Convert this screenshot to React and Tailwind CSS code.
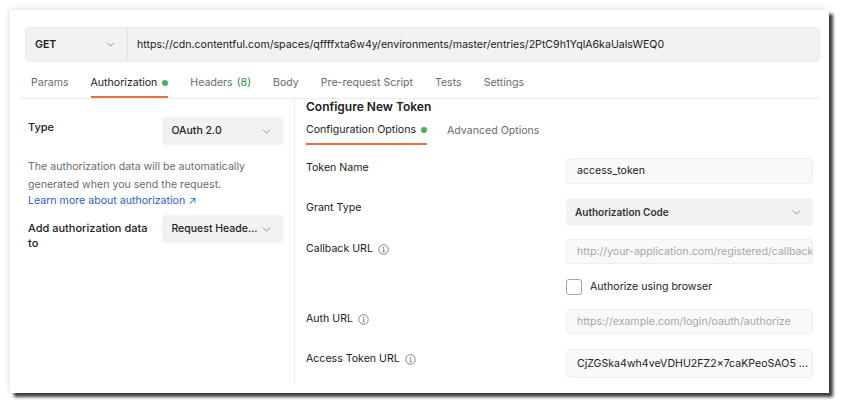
import React from 'react';
import { ChevronDown } from 'lucide-react';

// small circled "i" used next to field labels
const InfoIcon = () => (
    <svg width="11" height="11" viewBox="0 0 12 12" className="ml-[5px] text-[#6b6b6b]">
        <circle cx="6" cy="6" r="5.2" fill="none" stroke="currentColor" strokeWidth="0.9" />
        <circle cx="6" cy="3.6" r="0.7" fill="currentColor" />
        <path d="M5.2 5.3H6.3V8.6M5 8.6H7.2" fill="none" stroke="currentColor" strokeWidth="0.9" />
    </svg>
);

const Dot = () => <span className="ml-[5px] inline-block w-[6px] h-[6px] rounded-full bg-[#45b35a]" />;

const TABS = [
    { label: 'Params' },
    { label: 'Authorization', active: true, dot: true },
    { label: 'Headers', count: '(8)' },
    { label: 'Body' },
    { label: 'Pre-request Script' },
    { label: 'Tests' },
    { label: 'Settings' },
];

const Field = ({ label, info, children, className = '' }) => (
    <div className={`flex items-start ${className}`}>
        <div className="w-[260px] pt-[2px] leading-[16px] flex items-center text-[#212121]">
            {label}
            {info && <InfoIcon />}
        </div>
        <div className="w-[247px]">{children}</div>
    </div>
);

const Input = ({ value, placeholder, h = 'h-[26px]' }) => (
    <div className={`${h} flex items-center px-[10px] bg-[#f9f9f9] border border-[#ededed] rounded-[4px] overflow-hidden whitespace-nowrap`}>
        {value ? <span className="text-[#212121]">{value}</span> : <span className="text-[#a6a6a6]">{placeholder}</span>}
    </div>
);

const Select = ({ value, bold, className = '' }) => (
    <div className={`h-[28px] flex items-center justify-between pl-[9px] pr-[10px] bg-[#f2f2f2] rounded-[4px] whitespace-nowrap ${className}`}>
        <span className={`${bold ? 'font-semibold text-[10px] text-[#333]' : 'text-[10.5px] font-medium text-[#212121]'}`}>{value}</span>
        <ChevronDown className="w-[13px] h-[13px] text-[#7a7a7a]" strokeWidth={1.5} />
    </div>
);

export default function App() {
    return (
        <div className="w-[841px] h-[405px] bg-white pt-[10px] pl-[10px] font-['Inter',sans-serif] text-[10.6px]">
            <div className="w-[819px] h-[383px] bg-white shadow-[4px_4px_3px_rgba(0,0,0,0.75),-1px_-1px_6px_rgba(0,0,0,0.12)] flex flex-col">

                {/* URL bar */}
                <div className="mt-[17px] ml-[15px] w-[795px] h-[35px] flex bg-[#f2f2f2] border border-[#ececec] rounded-[4px]">
                    <div className="w-[102px] flex items-center justify-between pl-[9px] pr-[10px] border-r border-[#e2e2e2]">
                        <span className="font-semibold text-[10.6px] text-[#212121]">GET</span>
                        <ChevronDown className="w-[13px] h-[13px] text-[#7a7a7a]" strokeWidth={1.5} />
                    </div>
                    <div className="flex items-center pl-[9px] text-[10.6px] text-[#212121] whitespace-nowrap">
                        https://cdn.contentful.com/spaces/qffffxta6w4y/environments/master/entries/2PtC9h1YqlA6kaUalsWEQ0
                    </div>
                </div>

                {/* Request tabs */}
                <div className="mt-[8px] ml-[10px] w-[800px] flex border-b border-[#ededed] pl-[11px] gap-[22px]">
                    {TABS.map((tab) => (
                        <div
                            key={tab.label}
                            className={`h-[28px] flex items-center border-b-2 ${tab.active ? 'border-[#e8703f] text-[#212121]' : 'border-transparent text-[#6b6b6b]'}`}
                        >
                            <span className="text-[10.6px]">{tab.label}</span>
                            {tab.count && <span className="ml-[4px] text-[10.6px] text-[#2f8f43]">{tab.count}</span>}
                            {tab.dot && <Dot />}
                        </div>
                    ))}
                </div>

                <div className="flex flex-1 ml-[10px] mb-[9px]">
                    {/* Left: auth type */}
                    <div className="w-[275px] border-r border-[#ededed] pl-[8px] pr-[11px] pt-[18px]">
                        <div className="flex items-start">
                            <div className="w-[135px] pt-[2px] leading-[16px] font-medium text-[11px] text-[#212121]">Type</div>
                            <Select value="OAuth 2.0" className="w-[121px]" />
                        </div>
                        <p className="mt-[13px] leading-[18px] text-[#6b6b6b]">
                            The authorization data will be automatically generated when you send the request.
                        </p>
                        <div className="leading-[14px] text-[#2464c8]">Learn more about authorization ↗</div>
                        <div className="mt-[7px] flex items-start">
                            <div className="w-[135px] pr-[12px] pt-[6px] leading-[15px] font-medium text-[11px] text-[#212121]">Add authorization data to</div>
                            <Select value="Request Heade..." className="w-[121px]" />
                        </div>
                    </div>

                    {/* Right: configure token */}
                    <div className="flex-1 pl-[11px]">
                        <div className="text-[12px] font-semibold text-[#212121] leading-[16px]">Configure New Token</div>
                        <div className="mt-[6px] flex gap-[20px]">
                            <div className="h-[24px] flex items-center border-b-2 border-[#e8703f] pb-[4px] text-[#212121] text-[10.6px]">
                                Configuration Options <Dot />
                            </div>
                            <div className="h-[24px] flex items-center pb-[4px] text-[#6b6b6b] text-[10.6px]">Advanced Options</div>
                        </div>

                        <Field label="Token Name" className="mt-[13px]">
                            <Input value="access_token" />
                        </Field>
                        <Field label="Grant Type" className="mt-[14px]">
                            <Select value="Authorization Code" bold />
                        </Field>
                        <Field label="Callback URL" info className="mt-[13px]">
                            <Input placeholder="http://your-application.com/registered/callback" h="h-[25px]" />
                        </Field>
                        <div className="mt-[15px] ml-[260px] flex items-center">
                            <span className="w-[16px] h-[16px] rounded-[3px] border border-[#a6a6a6] bg-white" />
                            <span className="ml-[8px] text-[#212121]">Authorize using browser</span>
                        </div>
                        <Field label="Auth URL" info className="mt-[14px]">
                            <Input placeholder="https://example.com/login/oauth/authorize" h="h-[25px]" />
                        </Field>
                        <Field label="Access Token URL" info className="mt-[15px]">
                            <Input value="CjZGSka4wh4veVDHU2FZ2x7caKPeoSAO5 ..." h="h-[29px]" />
                        </Field>
                    </div>
                </div>
            </div>
        </div>
    );
}
